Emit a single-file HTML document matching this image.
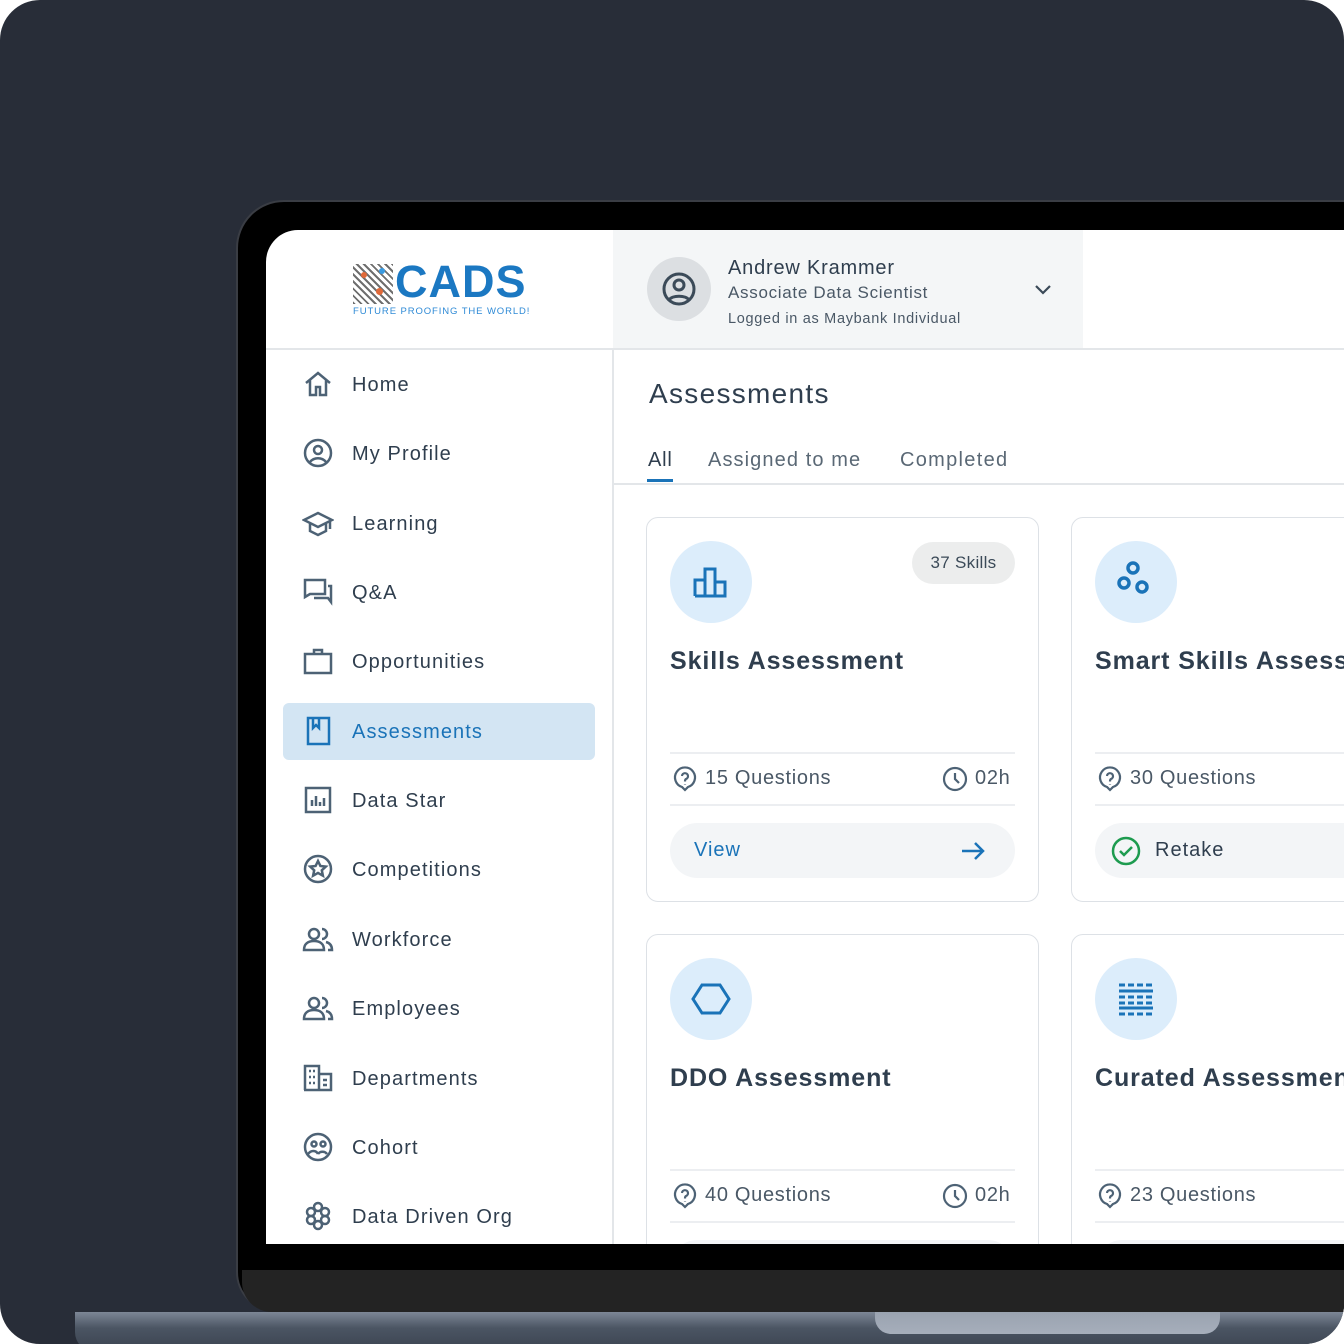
<!DOCTYPE html>
<html><head><meta charset="utf-8"><style>
*{margin:0;padding:0;box-sizing:border-box}
html,body{width:1344px;height:1344px;overflow:hidden;background:#fff}
body{font-family:"Liberation Sans",sans-serif;position:relative}
.bg{position:absolute;left:0;top:0;width:1344px;height:1344px;background:#282d38;border-radius:40px;overflow:hidden}
.a{position:absolute}
.bezel{left:236px;top:200px;width:1200px;height:1112px;background:#000;border-radius:48px 0 0 40px;border:2px solid #3a3d44}
.chin{left:242px;top:1270px;width:1110px;height:42px;background:#232323;border-radius:0 0 0 30px}
.base{left:75px;top:1312px;width:1280px;height:40px;background:linear-gradient(#7d8796,#4b5563 40%,#3a424f);border-radius:0 0 0 20px}
.notch{left:875px;top:1312px;width:345px;height:22px;background:linear-gradient(#9aa3b0,#a6aebb);border-radius:0 0 16px 16px}
.screen{left:266px;top:230px;width:1078px;height:1014px;background:#fff;border-radius:32px 0 0 0;overflow:hidden}
.s{position:absolute}
.nav{font-size:20px;color:#2f3e4e;letter-spacing:1.1px}
.nav svg{position:absolute;left:-50px;top:-6px}
.card{position:absolute;width:393px;height:385px;border:1.5px solid #dde1e6;border-radius:12px;background:#fff}
.ic{position:absolute;left:23px;top:23px;width:82px;height:82px;border-radius:50%;background:#dcedfb}
.ct{position:absolute;left:23px;top:129px;font-size:25px;font-weight:bold;color:#2f3e4e;white-space:nowrap;letter-spacing:.9px}
.hr{position:absolute;left:23px;width:345px;height:1.5px;background:#eceef1}
.meta{position:absolute;top:249px;font-size:20px;color:#4a5866;white-space:nowrap;letter-spacing:.7px}
.btn{position:absolute;left:23px;top:305px;width:345px;height:55px;border-radius:28px;background:#f3f5f7}
</style></head><body>
<div class="bg">
<div class="a bezel"></div>
<div class="a chin"></div>
<div class="a base"></div>
<div class="a notch"></div>
<div class="a screen">
 <div class="s" style="left:87px;top:34px;width:40px;height:40px;background:repeating-linear-gradient(45deg,#333 0 2px,#fff 2px 5px),#eee;opacity:.7"></div>
 <div class="s" style="left:95px;top:42px;width:6px;height:6px;background:#e06a3a;border-radius:50%"></div>
 <div class="s" style="left:110px;top:58px;width:7px;height:7px;background:#e06a3a;border-radius:50%"></div>
 <div class="s" style="left:113px;top:38px;width:6px;height:6px;background:#3a9ae0;border-radius:50%"></div>
 <div class="s" style="left:129px;top:26px;font-size:45px;font-weight:bold;color:#1b78c2;letter-spacing:1px">CADS</div>
 <div class="s" style="left:87px;top:76px;font-size:9.5px;color:#2e8ad6;letter-spacing:.9px">FUTURE PROOFING THE WORLD!</div>
 <div class="s" style="left:347px;top:0;width:470px;height:118px;background:#f4f6f7"></div>
 <div class="s" style="left:381px;top:27px;width:64px;height:64px;border-radius:50%;background:#dcdfe2"></div>
 <svg class="s" style="left:395px;top:41px" width="36" height="36" viewBox="0 0 36 36" fill="none" stroke="#3b4a58" stroke-width="3"><circle cx="18" cy="18" r="15"/><circle cx="18" cy="14" r="5"/><path d="M8 29c3-5 17-5 20 0"/></svg>
 <div class="s" style="left:462px;top:27px;font-size:20px;color:#2f3e4e;letter-spacing:.8px">Andrew Krammer</div>
 <div class="s" style="left:462px;top:53px;font-size:17px;color:#4a5866;letter-spacing:.7px">Associate Data Scientist</div>
 <div class="s" style="left:462px;top:81px;font-size:14.5px;color:#4a5866;letter-spacing:.7px">Logged in as Maybank Individual</div>
 <svg class="s" style="left:767px;top:52px" width="20" height="14" viewBox="0 0 20 14" fill="none" stroke="#3b4a58" stroke-width="2.2"><path d="M3 4l7 7 7-7"/></svg>
 <div class="s" style="left:0;top:118px;width:1078px;height:1.5px;background:#e3e6e9"></div>
 <div class="s" style="left:346px;top:118px;width:1.5px;height:900px;background:#e3e6e9"></div>
 <div class="s" style="left:17px;top:473px;width:312px;height:57px;background:#d3e5f3;border-radius:6px"></div>
 <div class="s nav" style="left:86px;top:144px"><svg width="32" height="32" viewBox="0 0 32 32" fill="none" stroke="#4d6275" stroke-width="2.5"><path d="M4 15L16 5l12 10M8 12v15h6v-8h4v8h6V12"/></svg>Home</div>
 <div class="s nav" style="left:86px;top:213px"><svg width="32" height="32" viewBox="0 0 32 32" fill="none" stroke="#4d6275" stroke-width="2.5"><circle cx="16" cy="16" r="13"/><circle cx="16" cy="13" r="4"/><path d="M8 25c4-5 12-5 16 0"/></svg>My Profile</div>
 <div class="s nav" style="left:86px;top:283px"><svg width="32" height="32" viewBox="0 0 32 32" fill="none" stroke="#4d6275" stroke-width="2.5"><path d="M2 13l14-7 14 7-14 7zM8 16v8l8 4 8-4v-8M28 14v8"/></svg>Learning</div>
 <div class="s nav" style="left:86px;top:352px"><svg width="32" height="32" viewBox="0 0 32 32" fill="none" stroke="#4d6275" stroke-width="2.5"><path d="M3 4h20v14H8l-5 3zM12 22h14l3 4V10h-3"/></svg>Q&amp;A</div>
 <div class="s nav" style="left:86px;top:421px"><svg width="32" height="32" viewBox="0 0 32 32" fill="none" stroke="#4d6275" stroke-width="2.5"><rect x="3" y="9" width="26" height="19"/><path d="M12 9V5h8v4"/></svg>Opportunities</div>
 <div class="s nav" style="left:86px;top:491px;color:#1a73b8"><svg width="32" height="32" viewBox="0 0 32 32" fill="none" stroke="#1a73b8" stroke-width="2.5"><rect x="6" y="3" width="21" height="26"/><path d="M11 3v10l3-3 3 3V3"/></svg>Assessments</div>
 <div class="s nav" style="left:86px;top:560px"><svg width="32" height="32" viewBox="0 0 32 32" fill="none" stroke="#4d6275" stroke-width="2.5"><rect x="4" y="4" width="24" height="24"/><path d="M10 22v-6M14 22v-10M18 22v-4M22 22v-8"/></svg>Data Star</div>
 <div class="s nav" style="left:86px;top:629px"><svg width="32" height="32" viewBox="0 0 32 32" fill="none" stroke="#4d6275" stroke-width="2.5"><circle cx="16" cy="16" r="13"/><path d="M16 8l2.4 5 5.4.6-4 3.7 1.1 5.4-4.9-2.8-4.9 2.8 1.1-5.4-4-3.7 5.4-.6z"/></svg>Competitions</div>
 <div class="s nav" style="left:86px;top:699px"><svg width="32" height="32" viewBox="0 0 32 32" fill="none" stroke="#4d6275" stroke-width="2.5"><circle cx="12" cy="11" r="5"/><path d="M2 27c0-6 4-9 10-9s10 3 10 9zM20 6a5 5 0 010 10M24 19c4 1 6 4 6 8h-4"/></svg>Workforce</div>
 <div class="s nav" style="left:86px;top:768px"><svg width="32" height="32" viewBox="0 0 32 32" fill="none" stroke="#4d6275" stroke-width="2.5"><circle cx="12" cy="11" r="5"/><path d="M2 27c0-6 4-9 10-9s10 3 10 9zM20 6a5 5 0 010 10M24 19c4 1 6 4 6 8h-4"/></svg>Employees</div>
 <div class="s nav" style="left:86px;top:838px"><svg width="32" height="32" viewBox="0 0 32 32" fill="none" stroke="#4d6275" stroke-width="2.5"><path d="M3 28V4h14v24M17 12h12v16H2M7 9h2M11 9h2M7 15h2M11 15h2M7 21h2M11 21h2M21 18h4M21 23h4"/></svg>Departments</div>
 <div class="s nav" style="left:86px;top:907px"><svg width="32" height="32" viewBox="0 0 32 32" fill="none" stroke="#4d6275" stroke-width="2.5"><circle cx="16" cy="16" r="13"/><circle cx="12" cy="13" r="2.5"/><circle cx="21" cy="13" r="2.5"/><path d="M6 23c3-4 8-4 10 0M16 23c2-3 7-3 9 0"/></svg>Cohort</div>
 <div class="s nav" style="left:86px;top:976px"><svg width="32" height="32" viewBox="0 0 32 32" fill="none" stroke="#4d6275" stroke-width="2.5"><circle cx="16" cy="7" r="4"/><circle cx="16" cy="25" r="4"/><circle cx="9" cy="12" r="4"/><circle cx="23" cy="12" r="4"/><circle cx="9" cy="20" r="4"/><circle cx="23" cy="20" r="4"/></svg>Data Driven Org</div>
 <div class="s" style="left:383px;top:148px;font-size:28px;color:#2f3e4e;letter-spacing:1.3px">Assessments</div>
 <div class="s" style="left:382px;top:219px;font-size:20px;color:#2f3e4e;letter-spacing:.8px">All</div>
 <div class="s" style="left:442px;top:219px;font-size:20px;color:#5a6875;letter-spacing:1.1px">Assigned to me</div>
 <div class="s" style="left:634px;top:219px;font-size:20px;color:#5a6875;letter-spacing:1.3px">Completed</div>
 <div class="s" style="left:347px;top:253px;width:731px;height:1.5px;background:#e3e6e9"></div>
 <div class="s" style="left:381px;top:249px;width:26px;height:3px;background:#1a73b8"></div>

 <div class="card" style="left:380px;top:287px">
  <div class="ic"><svg style="position:absolute;left:22px;top:22px" width="38" height="38" viewBox="0 0 38 38" fill="none" stroke="#1a73b8" stroke-width="3"><path d="M3 33V17h10v16M13 33V6h10v27M23 33V19h10v14zM3 33h30"/></svg></div>
  <div style="position:absolute;left:265px;top:24px;width:103px;height:42px;border-radius:21px;background:#eceded;font-size:17px;color:#3b4a58;text-align:center;line-height:42px;letter-spacing:.3px">37 Skills</div>
  <div class="ct">Skills Assessment</div>
  <div class="hr" style="top:234px"></div>
  <div class="meta" style="left:58px">15 Questions</div>
  <svg style="position:absolute;left:24px;top:248px" width="28" height="28" viewBox="0 0 28 28" fill="none" stroke="#4d6275" stroke-width="2.2"><path d="M14 24l-3-3a10 10 0 1 1 6 0z"/><path d="M11 10a3 3 0 1 1 4 3c-1 .5-1 1.5-1 2.5M14 18.5v.5"/></svg>
  <svg style="position:absolute;left:294px;top:247px" width="28" height="28" viewBox="0 0 28 28" fill="none" stroke="#4d6275" stroke-width="2.2"><circle cx="14" cy="14" r="11"/><path d="M14 8v6l4 4"/></svg>
  <div class="meta" style="left:328px">02h</div>
  <div class="hr" style="top:286px"></div>
  <div class="btn"><div style="position:absolute;left:24px;top:16px;font-size:20px;color:#1a73b8;letter-spacing:1px">View</div>
   <svg style="position:absolute;left:288px;top:13px" width="30" height="30" viewBox="0 0 30 30" fill="none" stroke="#1a73b8" stroke-width="2.5"><path d="M4 15h21M17 7l8 8-8 8"/></svg></div>
 </div>
 <div class="card" style="left:805px;top:287px;width:400px">
  <div class="ic"><svg style="position:absolute;left:19px;top:17px" width="44" height="44" viewBox="0 0 44 44" fill="none" stroke="#1a73b8" stroke-width="3.5"><circle cx="19" cy="10" r="5"/><circle cx="10" cy="25" r="5"/><circle cx="28" cy="29" r="5"/></svg></div>
  <div class="ct">Smart Skills Assessment</div>
  <div class="hr" style="top:234px"></div>
  <div class="meta" style="left:58px">30 Questions</div>
  <svg style="position:absolute;left:24px;top:248px" width="28" height="28" viewBox="0 0 28 28" fill="none" stroke="#4d6275" stroke-width="2.2"><path d="M14 24l-3-3a10 10 0 1 1 6 0z"/><path d="M11 10a3 3 0 1 1 4 3c-1 .5-1 1.5-1 2.5M14 18.5v.5"/></svg>
  <div class="hr" style="top:286px"></div>
  <div class="btn"><svg style="position:absolute;left:15px;top:12px" width="32" height="32" viewBox="0 0 32 32" fill="none" stroke="#1d9b4f" stroke-width="2.5"><circle cx="16" cy="16" r="13"/><path d="M10 16l4 4 8-8"/></svg>
   <div style="position:absolute;left:60px;top:16px;font-size:20px;color:#2f3e4e;letter-spacing:1px">Retake</div></div>
 </div>
 <div class="card" style="left:380px;top:704px">
  <div class="ic"><svg style="position:absolute;left:21px;top:21px" width="40" height="40" viewBox="0 0 40 40" fill="none" stroke="#1a73b8" stroke-width="3"><path d="M11 6h18l9 14-9 14H11L2 20z"/></svg></div>
  <div class="ct">DDO Assessment</div>
  <div class="hr" style="top:234px"></div>
  <div class="meta" style="left:58px">40 Questions</div>
  <svg style="position:absolute;left:24px;top:248px" width="28" height="28" viewBox="0 0 28 28" fill="none" stroke="#4d6275" stroke-width="2.2"><path d="M14 24l-3-3a10 10 0 1 1 6 0z"/><path d="M11 10a3 3 0 1 1 4 3c-1 .5-1 1.5-1 2.5M14 18.5v.5"/></svg>
  <svg style="position:absolute;left:294px;top:247px" width="28" height="28" viewBox="0 0 28 28" fill="none" stroke="#4d6275" stroke-width="2.2"><circle cx="14" cy="14" r="11"/><path d="M14 8v6l4 4"/></svg>
  <div class="meta" style="left:328px">02h</div>
  <div class="hr" style="top:286px"></div>
  <div class="btn"></div>
 </div>
 <div class="card" style="left:805px;top:704px;width:400px">
  <div class="ic"><svg style="position:absolute;left:22px;top:22px" width="38" height="38" viewBox="0 0 38 38" fill="none" stroke="#1a73b8" stroke-width="3"><path d="M2 5h34M2 17h34M2 23h34M2 34h34" stroke-dasharray="6 3"/><path d="M2 11h34M2 28h34"/></svg></div>
  <div class="ct">Curated Assessment</div>
  <div class="hr" style="top:234px"></div>
  <div class="meta" style="left:58px">23 Questions</div>
  <svg style="position:absolute;left:24px;top:248px" width="28" height="28" viewBox="0 0 28 28" fill="none" stroke="#4d6275" stroke-width="2.2"><path d="M14 24l-3-3a10 10 0 1 1 6 0z"/><path d="M11 10a3 3 0 1 1 4 3c-1 .5-1 1.5-1 2.5M14 18.5v.5"/></svg>
  <div class="hr" style="top:286px"></div>
  <div class="btn"></div>
 </div>
</div>
</div>
</body></html>
